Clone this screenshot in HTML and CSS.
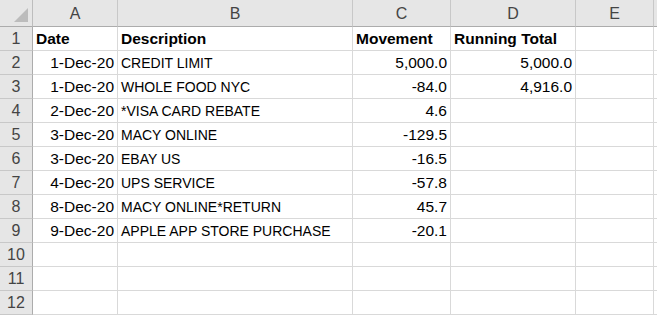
FILE: index.html
```html
<!DOCTYPE html>
<html>
<head>
<meta charset="utf-8">
<link rel="stylesheet" href="styles.css">
</head>
<body>
<div class="sheet">
  <div class="corner"><span class="tri"></span></div>
  <div class="ch">A</div><div class="ch">B</div><div class="ch">C</div><div class="ch">D</div><div class="ch">E</div><div class="ch last"></div>

  <div class="rh">1</div><div class="c b">Date</div><div class="c b">Description</div><div class="c b">Movement</div><div class="c b">Running Total</div><div class="c"></div><div class="c last"></div>
  <div class="rh">2</div><div class="c r">1-Dec-20</div><div class="c">CREDIT LIMIT</div><div class="c r">5,000.0</div><div class="c r">5,000.0</div><div class="c"></div><div class="c last"></div>
  <div class="rh">3</div><div class="c r">1-Dec-20</div><div class="c">WHOLE FOOD NYC</div><div class="c r">-84.0</div><div class="c r">4,916.0</div><div class="c"></div><div class="c last"></div>
  <div class="rh">4</div><div class="c r">2-Dec-20</div><div class="c">*VISA CARD REBATE</div><div class="c r">4.6</div><div class="c"></div><div class="c"></div><div class="c last"></div>
  <div class="rh">5</div><div class="c r">3-Dec-20</div><div class="c">MACY ONLINE</div><div class="c r">-129.5</div><div class="c"></div><div class="c"></div><div class="c last"></div>
  <div class="rh">6</div><div class="c r">3-Dec-20</div><div class="c">EBAY US</div><div class="c r">-16.5</div><div class="c"></div><div class="c"></div><div class="c last"></div>
  <div class="rh">7</div><div class="c r">4-Dec-20</div><div class="c">UPS SERVICE</div><div class="c r">-57.8</div><div class="c"></div><div class="c"></div><div class="c last"></div>
  <div class="rh">8</div><div class="c r">8-Dec-20</div><div class="c">MACY ONLINE*RETURN</div><div class="c r">45.7</div><div class="c"></div><div class="c"></div><div class="c last"></div>
  <div class="rh">9</div><div class="c r">9-Dec-20</div><div class="c">APPLE APP STORE PURCHASE</div><div class="c r">-20.1</div><div class="c"></div><div class="c"></div><div class="c last"></div>
  <div class="rh">10</div><div class="c"></div><div class="c"></div><div class="c"></div><div class="c"></div><div class="c"></div><div class="c last"></div>
  <div class="rh">11</div><div class="c"></div><div class="c"></div><div class="c"></div><div class="c"></div><div class="c"></div><div class="c last"></div>
  <div class="rh">12</div><div class="c"></div><div class="c"></div><div class="c"></div><div class="c"></div><div class="c"></div><div class="c last"></div>
</div>
</body>
</html>
```
FILE: styles.css
```css
html, body {
  margin: 0;
  padding: 0;
  background: #ffffff;
}
.sheet {
  display: grid;
  grid-template-columns: 33px 85px 235px 98px 125px 78px 1fr;
  grid-template-rows: 27px repeat(12, 24px);
  width: 657px;
  font-family: "Liberation Sans", Arial, sans-serif;
  font-size: 14px;
  color: #000;
}
.sheet > div {
  box-sizing: border-box;
  overflow: hidden;
  white-space: nowrap;
}
.corner {
  background: #e6e6e6;
  border-right: 1px solid #bdbdbd;
  border-bottom: 1px solid #acacac;
  position: relative;
}
.tri {
  position: absolute;
  right: 4px;
  bottom: 4px;
  width: 0;
  height: 0;
  border-left: 14px solid transparent;
  border-bottom: 14px solid #bcbcbc;
}
.ch {
  background: #e6e6e6;
  border-right: 1px solid #c8c8c8;
  border-bottom: 1px solid #acacac;
  display: flex;
  align-items: center;
  justify-content: center;
  color: #444444;
  font-size: 16px;
  padding-top: 1px;
}
.ch.last {
  border-right: none;
}
.rh {
  background: #e6e6e6;
  border-right: 1px solid #acacac;
  border-bottom: 1px solid #c8c8c8;
  display: flex;
  align-items: center;
  justify-content: center;
  color: #444444;
  font-size: 16px;
}
.c {
  border-right: 1px solid #d9d9d9;
  border-bottom: 1px solid #d9d9d9;
  display: flex;
  align-items: center;
  padding: 1px 3px 0 3px;
}
.c.last {
  border-right: none;
}
.c.r {
  justify-content: flex-end;
  font-size: 15.5px;
}
.c.b {
  font-weight: bold;
  font-size: 15.5px;
}
```
